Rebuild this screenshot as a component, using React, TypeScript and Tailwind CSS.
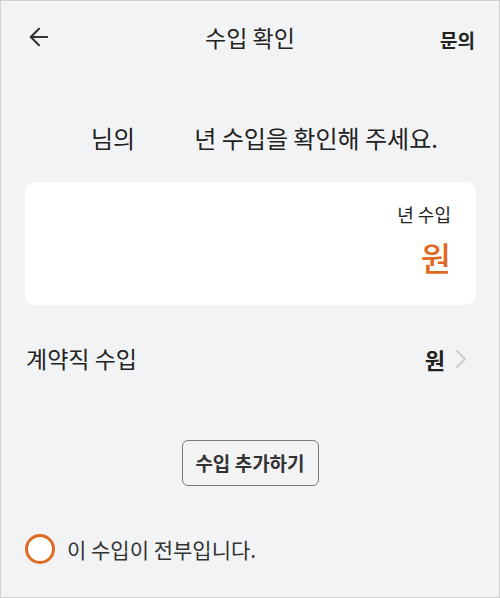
import { ArrowLeft, ChevronRight } from 'lucide-react';

const font = { fontFamily: '"Noto Sans CJK KR", "Noto Sans", sans-serif' };

export default function App() {
  return (
    <div
      className="w-[500px] h-[598px] border border-[#cfcfcf] bg-[#f2f3f5] text-[#222] flex flex-col"
      style={font}
    >
      {/* header */}
      <div className="h-[72px] flex items-center pl-[24px] pr-[24px] relative">
        <ArrowLeft className="w-[28px] h-[28px] text-[#333]" strokeWidth={1.8} />
        <h1 className="absolute left-0 right-0 text-center text-[23px] leading-none">수입 확인</h1>
        <button className="ml-auto text-[19px] font-bold leading-none mt-[4px]">문의</button>
      </div>

      <p className="mt-[53px] text-[24px] leading-none pl-[90px] whitespace-pre">
        님의           년 수입을 확인해 주세요.
      </p>

      {/* card */}
      <div className="ml-[24px] mr-[23px] mt-[32px] h-[123px] rounded-[10px] bg-white flex flex-col items-end pr-[25px] pt-[23px]">
        <span className="text-[18px] leading-none">년 수입</span>
        <span className="mt-[18px] text-[33px] leading-none font-medium text-[#e06a1f]">원</span>
      </div>

      {/* contract income row */}
      <div className="mt-[42px] pl-[25px] pr-[22px] flex items-center">
        <span className="text-[23px] leading-none">계약직 수입</span>
        <span className="ml-auto text-[22px] font-bold leading-none">원</span>
        <ChevronRight className="w-[32px] h-[32px] my-[-5px] text-[#cdcdcd]" strokeWidth={1.4} />
      </div>

      <div className="flex justify-center mt-[70px]">
        <button className="w-[137px] h-[46px] rounded-[6px] border border-[#7a7a7a] text-[19px] font-bold text-[#333]">
          수입 추가하기
        </button>
      </div>

      <label className="mt-[48px] ml-[24px] flex items-center gap-[12px]">
        <span className="w-[30px] h-[30px] rounded-full border-[3px] border-[#e06a1f] bg-white" />
        <span className="text-[21px] leading-none text-[#333]">이 수입이 전부입니다.</span>
      </label>
    </div>
  );
}
